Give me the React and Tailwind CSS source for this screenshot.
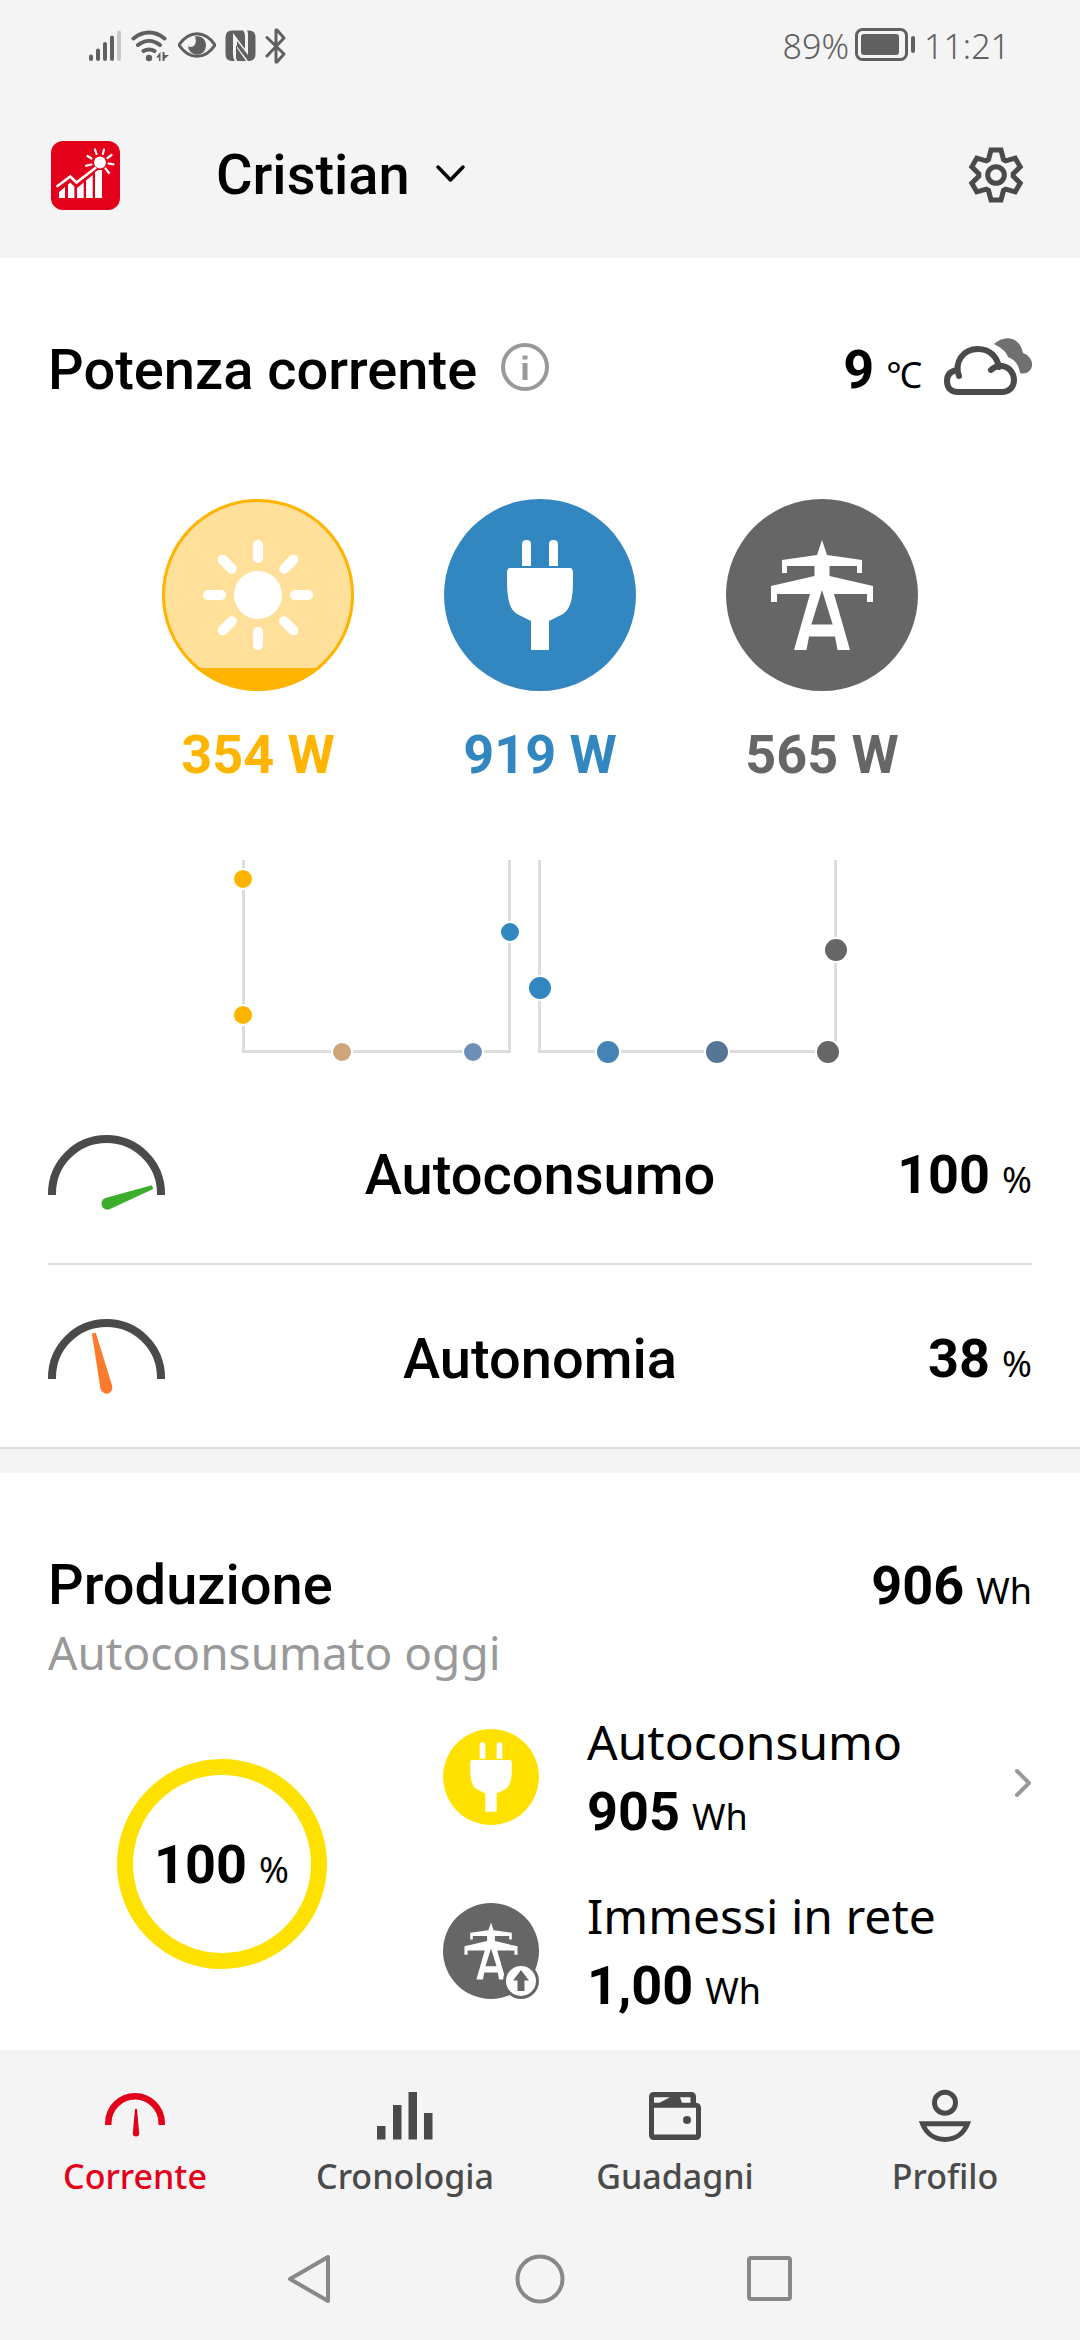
import React, { useState } from "react";

const PLUG_BODY =
  "M-30 -27 H30 Q33 -27 33 -22 V-14 C33 2 31 14 23 19 L9 26 V55 H-9 V26 L-23 19 C-31 14 -33 2 -33 -14 V-22 Q-33 -27 -30 -27Z";

const SunShape = () => (
  <g fill="#fff">
    <circle r="24" />
    {[0, 45, 90, 135, 180, 225, 270, 315].map((angle) => (
      <rect key={angle} x="-5" y="-55" width="10" height="23" rx="5" transform={`rotate(${angle})`} />
    ))}
  </g>
);

const PlugShape = () => (
  <g fill="#fff">
    <path d="M-18 -29 V-51 Q-18 -55 -13.5 -55 Q-9 -55 -9 -51 V-29Z" />
    <path d="M9 -29 V-51 Q9 -55 13.5 -55 Q18 -55 18 -51 V-29Z" />
    <path d={PLUG_BODY} />
  </g>
);

const PylonShape = () => (
  <path
    fill="#fff"
    fillRule="evenodd"
    d="M0 -55 L5 -40 L40 -35 V-22 H35 V-29 H7.5 V-19 L51 -9 V7 H45 V-1 H12 L28 55 H15.5 L13 41.5 H-13 L-15.5 55 H-28 L-12 -1 H-45 V7 H-51 V-9 L-7.5 -19 V-29 H-35 V-22 H-40 V-35 L-5 -40Z M0 -5 L-10.7 29.5 H10.7Z"
  />
);

const StatusBar = () => (
  <div className="flex h-[92px] items-center justify-between pl-[88px] pr-[70px] text-[#606060]">
    <div className="flex items-center gap-[9px]">
      <svg width="34" height="34" viewBox="0 0 34 34" fill="none" stroke="currentColor" strokeWidth="4" strokeLinecap="round">
        <path d="M3 27.5V30M10 21.5V30M17 15V30M24 8.500V30" />
        <path d="M31 3.500V30" stroke="#c8c8c8" />
      </svg>
      <svg width="38" height="34" viewBox="0 0 38 34" fill="none" stroke="currentColor" strokeWidth="4" strokeLinecap="round">
        <path d="M2.500 9.500C12 1.500 24 1.500 33.500 9.500M7 16C14 10.500 22 10.500 29 16M12.500 22C16 20 20 20 23.500 22" />
        <circle cx="18" cy="29" r="3.200" fill="currentColor" stroke="none" />
        <path d="M25 28.500L29.500 23V32H28V28.500ZM31.500 23H33.500V26H38L33.500 30V32H31.500Z" fill="currentColor" stroke="none" />
      </svg>
      <svg width="38" height="34" viewBox="0 0 38 34" fill="none" stroke="currentColor" strokeWidth="3">
        <path d="M1 16C11 1 27 1 37 16C27 31 11 31 1 16Z" strokeLinejoin="round" />
        <path d="M17 7.500C24 6 28 11 28 16.500A9 9 0 0 1 10 17C14 20 20 16 17 7.500Z" fill="currentColor" stroke="none" />
      </svg>
      <svg width="31" height="34" viewBox="0 0 31 34" fill="currentColor">
        <path d="M7 1.500H18C19.500 3 20 5 20 8V20L8 4V24C8 28 8.500 30 10 32H7Q0.500 32 0.500 25V8.500Q0.500 1.500 7 1.500Z" />
        <path d="M22 1.500H24Q30.500 1.500 30.500 8.500V25Q30.500 32 24 32H23L11 16V28C11 30 11.500 31 12.500 32H21L12 19V12L23 26V8C23 5 23 3 22 1.500Z" />
      </svg>
      <svg width="22" height="36" viewBox="0 0 22 36" fill="none" stroke="currentColor" strokeWidth="3" strokeLinejoin="round" strokeLinecap="round">
        <path d="M2 9.500L19 26L12 34H11V2H12L19 10L2 28" />
      </svg>
    </div>
    <div className="flex items-center font-['Noto_Sans'] text-[34px] font-light leading-[40px]">
      <span>89%</span>
      <svg className="ml-[5px] mr-2" width="62" height="36" viewBox="0 0 62 36">
        <rect x="2.500" y="1.500" width="50" height="30" rx="6" fill="none" stroke="currentColor" strokeWidth="3" />
        <rect x="7" y="6" width="38" height="21" rx="3" fill="currentColor" />
        <rect x="57" y="8" width="4" height="17" rx="2" fill="currentColor" />
      </svg>
      <span>11:21</span>
    </div>
  </div>
);

const Logo = () => (
  <svg width="69" height="69" viewBox="0 0 69 69">
    <rect width="69" height="69" rx="12" fill="#e2001a" />
    <g fill="#fff">
      <path d="M8 51L14 46V57H8ZM17 43.500L19.300 41.500L23.400 45.500V57H17ZM26 47L32.700 41.500V57H26ZM35 39.500L41.700 34V57H35ZM44 31L47 29H51V57H44Z" />
      <circle cx="49" cy="21.500" r="6" />
    </g>
    <path d="M5.500 45.700L19.300 35.500L25.500 41.500L45 26.500" fill="none" stroke="#fff" strokeWidth="2.600" />
    <path
      d="M44 8.500L45.500 13M53 8.500L51.800 13M60.500 14L56.500 17M57.500 22.500L62.500 23.300M54.500 27.500L58 32M35 24.700L40.500 23.500M36.500 15L40.500 17.500"
      stroke="#fff"
      strokeWidth="2.200"
      strokeLinecap="round"
    />
  </svg>
);

const GearIcon = () => (
  <svg width="56" height="56" viewBox="-28 -28 56 56" fill="none" stroke="#4a4a4a" strokeWidth="5">
    <path d="M-5 -25H5L7.500 -15.500L9.700 -14.200L19.200 -16.800L24.200 -8.200L17.200 -1.200V1.200L24.200 8.200L19.200 16.800L9.700 14.200L7.500 15.500L5 25H-5L-7.500 15.500L-9.700 14.200L-19.200 16.800L-24.200 8.200L-17.200 1.200V-1.200L-24.200 -8.200L-19.200 -16.800L-9.700 -14.200L-7.500 -15.500Z" />
    <circle r="8.300" />
  </svg>
);

const CloudIcon = () => (
  <svg width="90" height="64" viewBox="0 0 90 64">
    <path
      fill="#707070"
      d="M52 6C58 0 68 -2 74 3C79 7 80 11 81 15C87 17 91 23 90 28C89 33 84 37 78 35C77 28 74 22 66 19C64 13 58 9 52 6Z"
    />
    <path
      d="M17 38C12 24 21 11 36 11C48 11 55 19 57 29M49 32C52 29 56 27.500 60 28C68 29 72 36 72 42C72 50 66 54 60 54H16C8 54 5 49 5 43C5 36 9 33 15 32"
      fill="none"
      stroke="#4a4a4a"
      strokeWidth="6"
      strokeLinecap="round"
      strokeLinejoin="round"
    />
  </svg>
);

const Amount = ({ value, unit }) => (
  <span className="flex items-baseline gap-3 whitespace-nowrap">
    <strong className="text-[54px] font-bold">{value}</strong>
    <span className="font-['Noto_Sans'] text-[36px] leading-none">{unit}</span>
  </span>
);

const sources = [
  { id: "solar", label: "354 W", color: "text-[#ffb400]", bg: "#ffe09a", shape: SunShape },
  { id: "home", label: "919 W", color: "text-[#3387c1]", bg: "#3387c1", shape: PlugShape },
  { id: "grid", label: "565 W", color: "text-[#666666]", bg: "#666666", shape: PylonShape },
];

const flowDots = [
  { x: 33, y: 20, r: 9, color: "#ffb400" },
  { x: 33, y: 156, r: 9, color: "#ffb400" },
  { x: 132, y: 193, r: 9, color: "#cfa67b" },
  { x: 263, y: 193, r: 9, color: "#6e90b8" },
  { x: 300, y: 73, r: 9, color: "#3387c1" },
  { x: 330, y: 129, r: 11, color: "#3387c1" },
  { x: 398, y: 193, r: 11, color: "#4583b5" },
  { x: 507, y: 193, r: 11, color: "#577594" },
  { x: 618, y: 193, r: 11, color: "#666666" },
  { x: 626, y: 91, r: 11, color: "#666666" },
];

const SourceCircle = ({ source }) => {
  const Shape = source.shape;
  return (
    <div className={`flex flex-col items-center ${source.color}`}>
      <svg width="192" height="192" viewBox="-96 -96 192 192">
        <circle r="96" fill={source.bg} />
        {source.id === "solar" && (
          <>
            <path d="M-62 73H62A96 96 0 0 1 -62 73Z" fill="#ffb400" />
            <circle r="94.500" fill="none" stroke="#ffb400" strokeWidth="3" />
          </>
        )}
        <Shape />
      </svg>
      <span className="mt-8 text-[54px] font-bold leading-[64px]">{source.label}</span>
    </div>
  );
};

const FlowChart = () => (
  <svg className="mx-auto mt-[72px] block" width="660" height="222" viewBox="0 0 660 222">
    <path
      d="M33.500 1V192.500H299.500V1M329.500 1V192.500H625.500V1"
      fill="none"
      stroke="#dcdcdc"
      strokeWidth="3"
    />
    {flowDots.map((dot) => (
      <circle key={`${dot.x}-${dot.y}`} cx={dot.x} cy={dot.y} r={dot.r + 1} fill={dot.color} stroke="#fff" strokeWidth="2" />
    ))}
  </svg>
);

const GaugeRow = ({ label, value, color, angle }) => (
  <div className="grid h-[182px] grid-cols-[1fr_auto_1fr] items-center pt-[6px] leading-[64px]">
    <svg width="117" height="80" viewBox="0 0 117 80">
      <path d="M4 60V58.500A54.500 54.500 0 0 1 113 58.500V60" fill="none" stroke="#4a4a4a" strokeWidth="8" />
      <path
        d="M-2 -49H2L6 -1A6 6 0 1 1 -6 -1Z"
        fill={color}
        transform={`translate(58.500 69) rotate(${angle}) scale(1 ${angle > 0 ? 1 : 1.15})`}
      />
    </svg>
    <span className="text-[56px] font-medium">{label}</span>
    <div className="flex justify-end">
      <Amount value={value} unit="%" />
    </div>
  </div>
);

const tabs = [
  {
    label: "Corrente",
    icon: (
      <>
        <path d="M3.300 39V37A26.700 26.700 0 0 1 56.700 37V39" fill="none" stroke="currentColor" strokeWidth="6.500" />
        <path d="M30 23H32L34.200 47Q34.200 50.500 31 50.500Q27.800 50.500 27.800 47Z" fill="currentColor" />
      </>
    ),
  },
  {
    label: "Cronologia",
    icon: <path d="M2 40H10.500V53.500H2ZM18 19H26.500V53.500H18ZM33.500 6H42V53.500H33.500ZM49 27H57.500V53.500H49Z" fill="currentColor" />,
  },
  {
    label: "Guadagni",
    icon: (
      <>
        <path
          d="M9 6H46Q51 6 51 11V16.700Q56 17 56 22V49Q56 54 51 54H9Q4 54 4 49V11Q4 6 9 6ZM9 21.700V48.500H51V21.700ZM9 11.300V16.700H14.500L25 11.300ZM35 11.300L37 16.700H45.500V11.300Z"
          fill="currentColor"
          fillRule="evenodd"
        />
        <circle cx="42" cy="34" r="4" fill="currentColor" />
      </>
    ),
  },
  {
    label: "Profilo",
    icon: (
      <g fill="none" stroke="currentColor" strokeWidth="5">
        <circle cx="30" cy="16.700" r="10.500" />
        <path d="M7.500 37.700H52.500C49 47 41 53.500 30 53.500C19 53.500 11 47 7.500 37.700Z" />
      </g>
    ),
  },
];

const App = () => {
  const [activeTab, setActiveTab] = useState("Corrente");

  return (
    <div className="flex min-h-screen flex-col bg-[#f4f4f4] font-['Roboto',sans-serif] text-black">
      <StatusBar />

      <header className="flex h-[166px] items-center px-[51px]">
        <Logo />
        <label className="ml-[96px] flex items-center gap-[24px]">
          <select
            aria-label="Impianto"
            className="appearance-none bg-transparent text-[56px] font-medium leading-[66px]"
          >
            <option>Cristian</option>
          </select>
          <svg width="32" height="24" viewBox="0 0 32 24" fill="none" stroke="#000" strokeWidth="3.500" strokeLinecap="round" strokeLinejoin="round">
            <path d="M4 4L16.500 17L29 4" />
          </svg>
        </label>
        <button type="button" aria-label="Impostazioni" className="ml-auto mr-[5px]">
          <GearIcon />
        </button>
      </header>

      <main className="flex-1">
        <section className="border-b-2 border-[#dcdcdc] bg-white px-12 pt-20">
          <div className="flex h-16 items-center leading-[64px]">
            <h2 className="text-[56px] font-medium">Potenza corrente</h2>
            <button type="button" aria-label="Informazioni" className="ml-6">
              <svg width="48" height="54" viewBox="0 0 48 54" fill="none" stroke="#999" strokeWidth="4">
                <circle cx="24" cy="24" r="22" />
                <path d="M24 20V37M24 12.500V16.500" strokeWidth="5" />
              </svg>
            </button>
            <div className="ml-auto mr-5">
              <Amount value="9" unit="℃" />
            </div>
            <CloudIcon />
          </div>

          <div className="mt-[97px] flex justify-center gap-[90px]">
            {sources.map((source) => (
              <SourceCircle key={source.id} source={source} />
            ))}
          </div>

          <FlowChart />

          <GaugeRow label="Autoconsumo" value="100" color="#3dae2b" angle={70} />
          <div className="h-[2px] bg-[#dcdcdc]" />
          <GaugeRow label="Autonomia" value="38" color="#fc7a2c" angle={-13} />
        </section>

        <section className="mt-6 bg-white px-12 pb-[29px] pt-20">
          <div className="flex h-16 items-baseline justify-between leading-[64px]">
            <h2 className="text-[56px] font-medium">Produzione</h2>
            <Amount value="906" unit="Wh" />
          </div>
          <p className="font-['Noto_Sans'] text-[46px] leading-[70px] text-[#999]">Autoconsumato oggi</p>

          <div className="mt-5 flex items-center">
            <div className="flex w-[347px] justify-center">
              <div className="flex h-[210px] w-[210px] items-center justify-center rounded-full border-[16px] border-[#ffe100]">
                <Amount value="100" unit="%" />
              </div>
            </div>

            <div className="ml-12 flex flex-1 flex-col gap-[34px] leading-[70px]">
              <a href="#autoconsumo" className="flex items-center">
                <svg width="96" height="96" viewBox="-48 -48 96 96">
                  <circle r="48" fill="#ffe100" />
                  <g transform="scale(0.63)">
                    <PlugShape />
                  </g>
                </svg>
                <span className="ml-12 flex flex-col">
                  <span className="font-['Noto_Sans'] text-[48px]">Autoconsumo</span>
                  <Amount value="905" unit="Wh" />
                </span>
                <svg className="ml-auto" width="20" height="44" viewBox="0 0 20 44" fill="none" stroke="#999" strokeWidth="4" strokeLinecap="round" strokeLinejoin="round">
                  <path d="M5 16L17 28L5 40" />
                </svg>
              </a>
              <div className="flex items-center">
                <svg width="96" height="96" viewBox="-48 -48 96 96">
                  <circle r="48" fill="#666" />
                  <g transform="scale(0.52)">
                    <PylonShape />
                  </g>
                  <circle cx="30" cy="30" r="18" fill="#666" />
                  <circle cx="30" cy="30" r="15" fill="#fff" />
                  <path d="M30 19L38 29.500H33.500V40H26.500V29.500H22Z" fill="#666" />
                </svg>
                <span className="ml-12 flex flex-col">
                  <span className="font-['Noto_Sans'] text-[48px]">Immessi in rete</span>
                  <Amount value="1,00" unit="Wh" />
                </span>
              </div>
            </div>
          </div>
        </section>
      </main>

      <nav className="grid grid-cols-4 pb-[18px] pt-9">
        {tabs.map((tab) => (
          <button
            key={tab.label}
            type="button"
            onClick={() => setActiveTab(tab.label)}
            className={`flex flex-col items-center gap-[6px] ${activeTab === tab.label ? "text-[#e2001a]" : "text-[#4a4a4a]"}`}
          >
            <svg width="60" height="60" viewBox="0 0 60 60">
              {tab.icon}
            </svg>
            <span className="font-['Noto_Sans'] text-[34px] font-medium leading-[48px]">{tab.label}</span>
          </button>
        ))}
      </nav>

      <div className="flex h-[122px] items-center justify-center gap-[180px] text-[#888]">
        <button type="button" aria-label="Indietro">
          <svg width="50" height="50" viewBox="0 0 50 50" fill="none" stroke="currentColor" strokeWidth="4" strokeLinejoin="round">
            <path d="M43 3V47L5 25Z" />
          </svg>
        </button>
        <button type="button" aria-label="Home">
          <svg width="50" height="50" viewBox="0 0 50 50" fill="none" stroke="currentColor" strokeWidth="4">
            <circle cx="25" cy="25" r="22.500" />
          </svg>
        </button>
        <button type="button" aria-label="Recenti">
          <svg width="50" height="50" viewBox="0 0 50 50" fill="none" stroke="currentColor" strokeWidth="4">
            <rect x="4" y="4" width="41" height="41" rx="2" />
          </svg>
        </button>
      </div>
    </div>
  );
};

export default App;
